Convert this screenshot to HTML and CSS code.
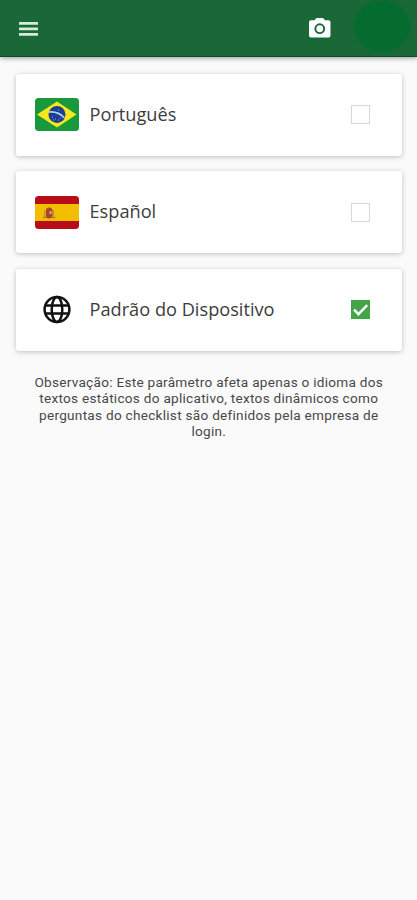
FILE: index.html
```html
<!DOCTYPE html>
<html lang="pt-BR">
<head>
<meta charset="utf-8">
<title>Idioma</title>
<link rel="stylesheet" href="styles.css">
</head>
<body>
<header class="bar">
  <svg class="menu" viewBox="0 0 19 14"><path d="M0 0h19v2.7H0zM0 5.6h19v2.7H0zM0 11.1h19v2.7H0z"/></svg>
  <svg class="camera" viewBox="0 0 22 20"><path fill-rule="evenodd" d="M7.6 0h6.8l2 2.200H20a2 2 0 0 1 2 2V18a2 2 0 0 1-2 2H2a2 2 0 0 1-2-2V4.200a2 2 0 0 1 2-2h3.600zM11 5.500a5.500 5.500 0 1 0 0 11 5.500 5.500 0 0 0 0-11zm0 2a3.500 3.500 0 1 1 0 7 3.500 3.500 0 0 1 0-7z"/></svg>
  <div class="avatar"></div>
</header>
<main class="list">
  <div class="card">
    <svg class="flag" viewBox="0 0 44 33"><rect width="44" height="33" rx="3.500" fill="#189a3c"/><path d="M22 3.500 41.500 16.500 22 29.500 2 16.500z" fill="#f8e71c"/><circle cx="22" cy="16.500" r="8.500" fill="#1c3f94"/><path d="M14 14q9-1 15.500 6" fill="none" stroke="#b9d5ec" stroke-width="1.500"/><path d="M17 19h1M20 21h1M23 22h1M25 20h1M18 22h1M23 12h1" stroke="#8fa9d5" stroke-width="1"/></svg>
    <span class="name">Português</span>
    <span class="box"></span>
  </div>
  <div class="card">
    <svg class="flag" viewBox="0 0 44 33"><rect width="44" height="33" rx="3.500" fill="#b80d18"/><path d="M0 8h44v17H0z" fill="#f2be00"/><path d="M9 14h1.500v8H9zM17.500 14H19v8h-1.500z" fill="#c98a4a"/><path d="M11 14.500q0-3 3.200-3t3.200 3v5q0 3-3.200 3t-3.200-3z" fill="#a8481f"/><path d="M14.500 15h2v3h-2z" fill="#d9a79a"/><path d="M8 21.500h4M16.500 21.500h4" stroke="#a47732"/></svg>
    <span class="name">Español</span>
    <span class="box"></span>
  </div>
  <div class="card">
    <svg class="flag" viewBox="0 0 44 33"><g fill="none" stroke="#111" stroke-width="2.500"><circle cx="22" cy="16.500" r="12.400"/><ellipse cx="22" cy="16.500" rx="5.300" ry="12.400"/><path d="M10.500 12.400h23M10.500 20.600h23"/></g></svg>
    <span class="name">Padrão do Dispositivo</span>
    <span class="box checked"><svg viewBox="0 0 19 19"><path d="M3 9.700l4.500 4.500L16.200 5.200"/></svg></span>
  </div>
  <p class="note">Observação: Este parâmetro afeta apenas o idioma dos<br>textos estáticos do aplicativo, textos dinâmicos como<br>perguntas do checklist são definidos pela empresa de<br>login.</p>
</main>
</body>
</html>
```
FILE: styles.css
```css
* { box-sizing: border-box; }
body {
  margin: 0;
  min-height: 900px;
  background: #fafafa;
  overflow: hidden;
}
.bar {
  display: flex;
  align-items: center;
  height: 57px;
  padding: 0 7px 0 19px;
  background: #1a6838;
  border-bottom: 1px solid #075020;
  box-shadow: 0 1px 5px rgba(0, 0, 0, .4);
}
.menu { width: 19px; height: 14px; margin-top: 2px; fill: #d5ecd8; }
.camera { width: 21.5px; height: 19.5px; margin: 0 23.5px 0 auto; fill: #fff; }
.avatar {
  width: 56px;
  height: 52px;
  margin-top: -4px;
  border-radius: 50%;
  background: #036c2e;
  filter: blur(1.5px);
}
.list {
  display: flex;
  flex-direction: column;
  gap: 15.5px;
  padding: 16.5px 15.5px 0 16px;
}
.card {
  display: flex;
  align-items: center;
  height: 82px;
  padding: 0 31.5px 0 19px;
  background: #fff;
  border-radius: 3px;
  box-shadow: 0 1px 5px rgba(0, 0, 0, .24);
}
.flag { width: 44px; height: 33px; }
.name {
  margin: 0 0 2px 10.5px;
  font: 18.2px/26px "Open Sans", sans-serif;
  color: #3c3c3c;
}
.box {
  width: 19px;
  height: 19px;
  margin-left: auto;
  border: 1.5px solid #d3dadf;
}
.checked { border: 0; background: #43a548; }
.checked svg { display: block; }
.checked path { fill: none; stroke: #fff; stroke-width: 2.4; }
.note {
  margin: 8px 0 0;
  font: 13.6px/16.3px Roboto, sans-serif;
  letter-spacing: .27px;
  color: #484848;
  text-align: center;
  white-space: nowrap;
}
```
